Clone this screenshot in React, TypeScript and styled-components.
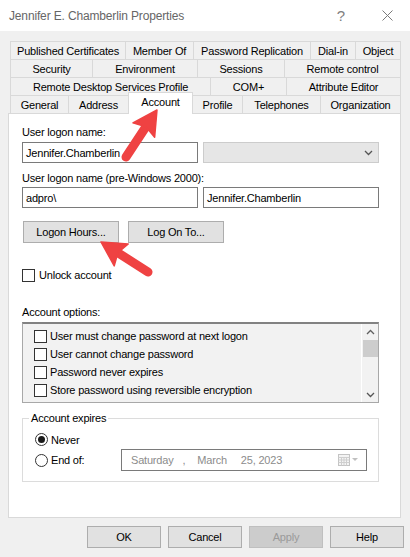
import React from "react";
import styled, { createGlobalStyle, css } from "styled-components";

const Global = createGlobalStyle`
  html, body { margin: 0; padding: 0; background: #f0f0f0; }
  body {
    font-family: "Liberation Sans", Arial, sans-serif;
    font-size: 11px;
    letter-spacing: -0.2px;
    color: #000;
  }
  * { box-sizing: border-box; }
`;

const Window = styled.div`
  position: relative;
  width: 410px;
  height: 557px;
  background: #f0f0f0;
  display: flex;
  flex-direction: column;
  overflow: hidden;
`;

const TitleBar = styled.div`
  height: 31px;
  flex: none;
  background: #fff;
  display: flex;
  align-items: center;
  padding-left: 9px;
`;

const Title = styled.div`
  flex: 1;
  font-size: 12px;
  letter-spacing: -0.15px;
  color: #666;
`;

const CaptionButton = styled.div`
  width: 46px;
  height: 31px;
  display: flex;
  align-items: center;
  justify-content: center;
  color: #808080;
  font-size: 15px;
  letter-spacing: 0;
`;

const Body = styled.div`
  display: flex;
  flex-direction: column;
  padding: 10px 0 0 8px;
`;

const TabStrip = styled.div`
  display: flex;
  flex-direction: column;
  margin-left: 2px;
`;

const TabRow = styled.div`
  display: flex;
  height: 18px;
  border-left: 1px solid #d9d9d9;
  align-self: flex-start;
`;

const Tab = styled.div<{ $w: number; $sel?: boolean }>`
  width: ${(p) => p.$w}px;
  height: 18px;
  border-top: 1px solid #d9d9d9;
  border-right: 1px solid #d9d9d9;
  background: #f0f0f0;
  display: flex;
  align-items: center;
  justify-content: center;
  white-space: nowrap;
  flex: none;
  ${(p) =>
    p.$sel &&
    css`
      position: relative;
      z-index: 2;
      background: #fff;
      height: 22px;
      margin-top: -3px;
      margin-left: -1px;
      width: ${p.$w + 1}px;
      border-left: 1px solid #d9d9d9;
      padding-bottom: 4px;
    `}
`;

const Panel = styled.div`
  width: 393px;
  height: 405px;
  background: #fff;
  border: 1px solid #d9d9d9;
  display: flex;
  flex-direction: column;
  padding-left: 13px;
`;

const Label = styled.div<{ $mt: number }>`
  line-height: 13px;
  margin-top: ${(p) => p.$mt}px;
  white-space: nowrap;
`;

const FieldRow = styled.div<{ $mt: number }>`
  display: flex;
  gap: 5px;
  margin-top: ${(p) => p.$mt}px;
`;

const TextBox = styled.div`
  width: 176px;
  height: 21px;
  border: 1px solid #7a7a7a;
  background: #fff;
  display: flex;
  align-items: center;
  padding: 0 3px;
`;

const Combo = styled.div`
  width: 176px;
  height: 21px;
  border: 1px solid #cccccc;
  background: #e6e6e6;
  display: flex;
  align-items: center;
  justify-content: flex-end;
  padding-right: 5px;
`;

const ButtonRow = styled.div<{ $mt: number }>`
  display: flex;
  gap: 9px;
  margin-top: ${(p) => p.$mt}px;
  margin-left: 1px;
`;

const Button = styled.div<{ $w: number; $disabled?: boolean }>`
  width: ${(p) => p.$w}px;
  height: 22px;
  flex: none;
  background: ${(p) => (p.$disabled ? "#cccccc" : "#e1e1e1")};
  border: 1px solid ${(p) => (p.$disabled ? "#bfbfbf" : "#adadad")};
  color: ${(p) => (p.$disabled ? "#9a9a9a" : "#000")};
  display: flex;
  align-items: center;
  justify-content: center;
  white-space: nowrap;
`;

const CheckRow = styled.div<{ $mt?: number; $gap: number }>`
  display: flex;
  align-items: center;
  gap: ${(p) => p.$gap}px;
  margin-top: ${(p) => p.$mt ?? 0}px;
  line-height: 13px;
  white-space: nowrap;
`;

const CheckBox = styled.span`
  width: 13px;
  height: 13px;
  flex: none;
  border: 1px solid #333;
  background: #fff;
`;

const ListBox = styled.div<{ $mt: number }>`
  width: 357px;
  height: 81px;
  margin-top: ${(p) => p.$mt}px;
  background: #f2f2f2;
  border: 1px solid #a8a8a8;
  border-top: 2px solid #828282;
  display: flex;
`;

const ListItems = styled.div`
  flex: 1;
  display: flex;
  flex-direction: column;
  padding: 3px 0 0 11px;
`;

const ListItem = styled.div`
  height: 18px;
  display: flex;
  align-items: center;
  gap: 3px;
  white-space: nowrap;
`;

const ScrollBar = styled.div`
  width: 17px;
  flex: none;
  border-left: 1px solid #fff;
  display: flex;
  flex-direction: column;
  align-items: center;
  padding: 5px 0 4px;
`;

const Thumb = styled.div`
  width: 15px;
  height: 17px;
  background: #cdcdcd;
  margin-top: 5px;
`;

const ScrollSpacer = styled.div`
  flex: 1;
`;

const GroupBox = styled.div<{ $mt: number }>`
  width: 357px;
  height: 64px;
  margin-top: ${(p) => p.$mt}px;
  border: 1px solid #dcdcdc;
  display: flex;
  flex-direction: column;
  padding-left: 12px;
`;

const Legend = styled.div`
  align-self: flex-start;
  margin: -7px 0 0 -6px;
  padding: 0 2px;
  background: #fff;
  line-height: 13px;
`;

const RadioRow = styled.div<{ $mt: number; $h: number }>`
  display: flex;
  align-items: center;
  height: ${(p) => p.$h}px;
  margin-top: ${(p) => p.$mt}px;
  white-space: nowrap;
`;

const RadioOption = styled.div<{ $w?: number }>`
  display: flex;
  align-items: center;
  gap: 3px;
  width: ${(p) => (p.$w ? `${p.$w}px` : "auto")};
  flex: none;
`;

const Radio = styled.span`
  width: 13px;
  height: 13px;
  border-radius: 50%;
  border: 1px solid #333;
  background: #fff;
  display: flex;
  align-items: center;
  justify-content: center;
  flex: none;
`;

const RadioDot = styled.span`
  width: 7px;
  height: 7px;
  border-radius: 50%;
  background: #1a1a1a;
`;

const DatePicker = styled.div`
  width: 246px;
  height: 22px;
  border: 1px solid #7a7a7a;
  background: #fff;
  display: flex;
  align-items: center;
  padding: 0 7px 0 9px;
  color: #8c8c8c;
`;

const DatePart = styled.span<{ $ml: number }>`
  margin-left: ${(p) => p.$ml}px;
`;

const CalIcon = styled.span`
  margin-left: auto;
  display: flex;
  align-items: center;
`;

const Footer = styled.div`
  display: flex;
  justify-content: flex-end;
  gap: 7px;
  margin-top: 8px;
  padding-right: 6px;
`;

const Overlay = styled.svg`
  position: absolute;
  left: 0;
  top: 0;
  z-index: 10;
  pointer-events: none;
`;

const tabRows: [string, number, boolean?][][] = [
  [
    ["Published Certificates", 115],
    ["Member Of", 68],
    ["Password Replication", 117],
    ["Dial-in", 45],
    ["Object", 45],
  ],
  [
    ["Security", 82],
    ["Environment", 105],
    ["Sessions", 87],
    ["Remote control", 116],
  ],
  [
    ["Remote Desktop Services Profile", 200],
    ["COM+", 76],
    ["Attribute Editor", 114],
  ],
  [
    ["General", 58],
    ["Address", 60],
    ["Account", 64, true],
    ["Profile", 50],
    ["Telephones", 78],
    ["Organization", 80],
  ],
];

const options = [
  "User must change password at next logon",
  "User cannot change password",
  "Password never expires",
  "Store password using reversible encryption",
];

function Arrow({ x1, y1, x2, y2 }: { x1: number; y1: number; x2: number; y2: number }) {
  const L = 24;
  const H = 13;
  const dx = x2 - x1;
  const dy = y2 - y1;
  const len = Math.hypot(dx, dy);
  const ux = dx / len;
  const uy = dy / len;
  const nx = -uy;
  const ny = ux;
  const bx = x2 - ux * L;
  const by = y2 - uy * L;
  const head = `${x2},${y2} ${bx + nx * H},${by + ny * H} ${bx + ux * 4},${by + uy * 4} ${bx - nx * H},${by - ny * H}`;
  return (
    <g fill="#ef4242" stroke="#ef4242">
      <line x1={x1} y1={y1} x2={bx + ux * 3} y2={by + uy * 3} strokeWidth={9} strokeLinecap="round" />
      <polygon points={head} strokeWidth={1.5} strokeLinejoin="round" />
    </g>
  );
}

const Chevron = ({ up }: { up?: boolean }) => (
  <svg width="9" height="6" viewBox="0 0 9 6">
    <polyline
      points={up ? "1,5 4.5,1.5 8,5" : "1,1 4.5,4.5 8,1"}
      fill="none"
      stroke={up ? "#606060" : "#555"}
      strokeWidth="1.3"
    />
  </svg>
);

export default function App() {
  return (
    <>
      <Global />
      <Window>
        <TitleBar>
          <Title>Jennifer E. Chamberlin Properties</Title>
          <CaptionButton>?</CaptionButton>
          <CaptionButton>
            <svg width="11" height="11" viewBox="0 0 11 11">
              <path d="M0.5 0.5 L10.5 10.5 M10.5 0.5 L0.5 10.5" stroke="#7a7a7a" strokeWidth="1" />
            </svg>
          </CaptionButton>
        </TitleBar>
        <Body>
          <TabStrip>
            {tabRows.map((row, i) => (
              <TabRow key={i}>
                {row.map(([name, w, sel]) => (
                  <Tab key={name} $w={w} $sel={sel}>
                    {name}
                  </Tab>
                ))}
              </TabRow>
            ))}
          </TabStrip>
          <Panel>
            <Label $mt={12}>User logon name:</Label>
            <FieldRow $mt={3}>
              <TextBox>Jennifer.Chamberlin</TextBox>
              <Combo>
                <Chevron />
              </Combo>
            </FieldRow>
            <Label $mt={9}>User logon name (pre-Windows 2000):</Label>
            <FieldRow $mt={2}>
              <TextBox>adpro\</TextBox>
              <TextBox>Jennifer.Chamberlin</TextBox>
            </FieldRow>
            <ButtonRow $mt={13}>
              <Button $w={96}>Logon Hours...</Button>
              <Button $w={96}>Log On To...</Button>
            </ButtonRow>
            <CheckRow $mt={26} $gap={4}>
              <CheckBox />
              Unlock account
            </CheckRow>
            <Label $mt={24}>Account options:</Label>
            <ListBox $mt={3}>
              <ListItems>
                {options.map((o) => (
                  <ListItem key={o}>
                    <CheckBox />
                    {o}
                  </ListItem>
                ))}
              </ListItems>
              <ScrollBar>
                <Chevron up />
                <Thumb />
                <ScrollSpacer />
                <Chevron />
              </ScrollBar>
            </ListBox>
            <GroupBox $mt={15}>
              <Legend>Account expires</Legend>
              <RadioRow $mt={8} $h={13}>
                <RadioOption>
                  <Radio>
                    <RadioDot />
                  </Radio>
                  Never
                </RadioOption>
              </RadioRow>
              <RadioRow $mt={3} $h={22}>
                <RadioOption $w={86}>
                  <Radio />
                  End of:
                </RadioOption>
                <DatePicker>
                  <DatePart $ml={0}>Saturday</DatePart>
                  <DatePart $ml={9}>,</DatePart>
                  <DatePart $ml={12}>March</DatePart>
                  <DatePart $ml={14}>25, 2023</DatePart>
                  <CalIcon>
                    <svg width="21" height="12" viewBox="0 0 21 12">
                      <rect x="0.5" y="0.5" width="11" height="11" fill="#f4f4f4" stroke="#c4c4c4" />
                      <path
                        d="M0.5 3.5 H11.5 M0.5 6 H11.5 M0.5 8.5 H11.5 M3.5 3.5 V11.5 M6 3.5 V11.5 M8.5 3.5 V11.5"
                        stroke="#cfcfcf"
                        strokeWidth="1"
                      />
                      <polygon points="14,4 20,4 17,7" fill="#c0c0c0" />
                    </svg>
                  </CalIcon>
                </DatePicker>
              </RadioRow>
            </GroupBox>
          </Panel>
        </Body>
        <Footer>
          <Button $w={74}>OK</Button>
          <Button $w={74}>Cancel</Button>
          <Button $w={74} $disabled>
            Apply
          </Button>
          <Button $w={74}>Help</Button>
        </Footer>
        <Overlay width="410" height="557" viewBox="0 0 410 557">
          <Arrow x1={126} y1={157} x2={157} y2={110} />
          <Arrow x1={148} y1={272} x2={101} y2={242} />
        </Overlay>
      </Window>
    </>
  );
}
